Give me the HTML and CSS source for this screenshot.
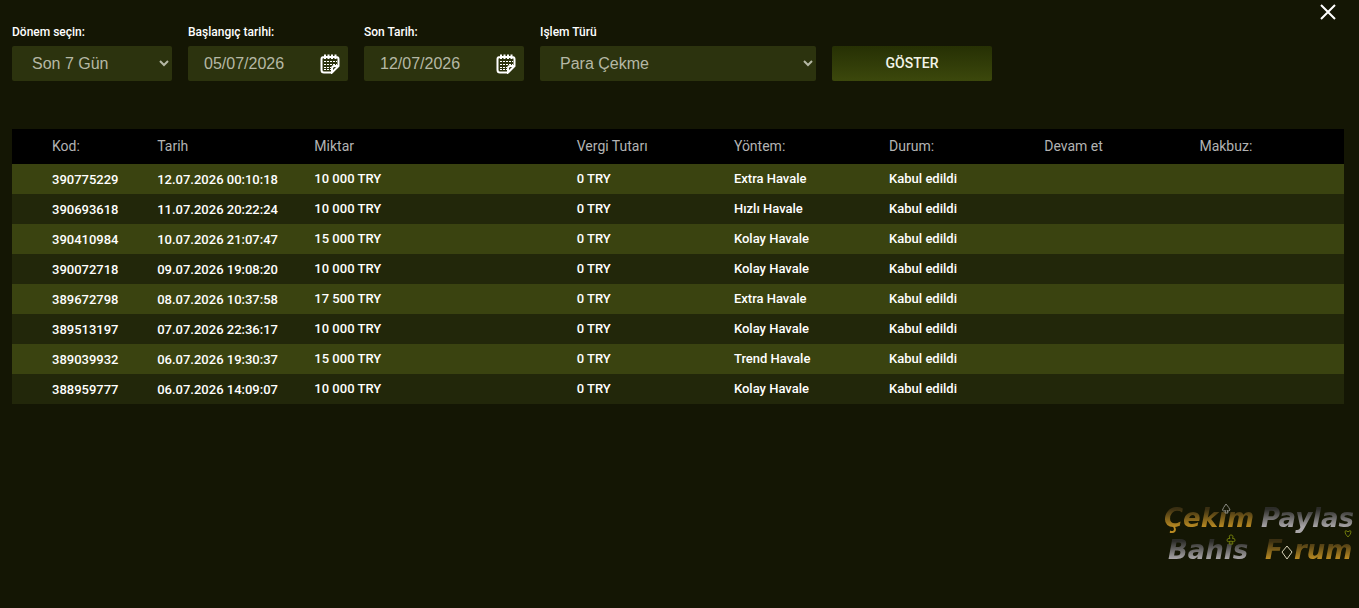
FILE: index.html
```html
<!DOCTYPE html>
<html lang="tr">
<head>
    <meta charset="UTF-8">
    <meta name="viewport" content="width=device-width, initial-scale=1.0">
    <title>İşlem Geçmişi</title>
    <link rel="stylesheet" href="styles.css">
</head>
<body>

    <button class="btnClose" type="button" aria-label="Kapat">
        <svg width="16" height="16" viewBox="0 0 16 16"><path d="M1 1L15 15M15 1L1 15"/></svg>
    </button>

    <form class="filters">
        <div class="inputGroup">
            <label for="period">Dönem seçin:</label>
            <select id="period">
                <option>Son 7 Gün</option>
            </select>
        </div>
        <div class="inputGroup">
            <label for="dateFrom">Başlangıç tarihi:</label>
            <div class="dateField">
                <input type="text" id="dateFrom" value="05/07/2026" autocomplete="off">
                <svg class="calendar" width="20" height="20" viewBox="0 0 20 20">
                    <path class="frame" d="M12 18.500H4Q1.500 18.500 1.500 16V5Q1.500 3 4 3H16Q18.500 3 18.500 5V12L12 18.500V14.500Q12 12 14.500 12H18.500M5 0.500V5M8.500 0.500V5M12 0.500V5M15.500 0.500V5"/>
                    <path class="dots" d="M4 7.500H17M4 10.500H17M4 13.500H11M4 15.500H11"/>
                </svg>
            </div>
        </div>
        <div class="inputGroup">
            <label for="dateTo">Son Tarih:</label>
            <div class="dateField">
                <input type="text" id="dateTo" value="12/07/2026" autocomplete="off">
                <svg class="calendar" width="20" height="20" viewBox="0 0 20 20">
                    <path class="frame" d="M12 18.500H4Q1.500 18.500 1.500 16V5Q1.500 3 4 3H16Q18.500 3 18.500 5V12L12 18.500V14.500Q12 12 14.500 12H18.500M5 0.500V5M8.500 0.500V5M12 0.500V5M15.500 0.500V5"/>
                    <path class="dots" d="M4 7.500H17M4 10.500H17M4 13.500H11M4 15.500H11"/>
                </svg>
            </div>
        </div>
        <div class="inputGroup wide">
            <label for="type">Işlem Türü</label>
            <select id="type">
                <option>Para Çekme</option>
            </select>
        </div>
        <button class="btnShow" type="button">GÖSTER</button>
    </form>

    <table class="history">
        <thead>
            <tr>
                <th class="colCode">Kod:</th>
                <th class="colDate">Tarih</th>
                <th class="colAmount">Miktar</th>
                <th class="colDate">Vergi Tutarı</th>
                <th class="colStatus">Yöntem:</th>
                <th class="colStatus">Durum:</th>
                <th class="colStatus">Devam et</th>
                <th>Makbuz:</th>
            </tr>
        </thead>
        <tbody>
            <tr><td class="num">390775229</td><td class="num">12.07.2026 00:10:18</td><td>10 000 TRY</td><td>0 TRY</td><td>Extra Havale</td><td>Kabul edildi</td><td></td><td></td></tr>
            <tr><td class="num">390693618</td><td class="num">11.07.2026 20:22:24</td><td>10 000 TRY</td><td>0 TRY</td><td>Hızlı Havale</td><td>Kabul edildi</td><td></td><td></td></tr>
            <tr><td class="num">390410984</td><td class="num">10.07.2026 21:07:47</td><td>15 000 TRY</td><td>0 TRY</td><td>Kolay Havale</td><td>Kabul edildi</td><td></td><td></td></tr>
            <tr><td class="num">390072718</td><td class="num">09.07.2026 19:08:20</td><td>10 000 TRY</td><td>0 TRY</td><td>Kolay Havale</td><td>Kabul edildi</td><td></td><td></td></tr>
            <tr><td class="num">389672798</td><td class="num">08.07.2026 10:37:58</td><td>17 500 TRY</td><td>0 TRY</td><td>Extra Havale</td><td>Kabul edildi</td><td></td><td></td></tr>
            <tr><td class="num">389513197</td><td class="num">07.07.2026 22:36:17</td><td>10 000 TRY</td><td>0 TRY</td><td>Kolay Havale</td><td>Kabul edildi</td><td></td><td></td></tr>
            <tr><td class="num">389039932</td><td class="num">06.07.2026 19:30:37</td><td>15 000 TRY</td><td>0 TRY</td><td>Trend Havale</td><td>Kabul edildi</td><td></td><td></td></tr>
            <tr><td class="num">388959777</td><td class="num">06.07.2026 14:09:07</td><td>10 000 TRY</td><td>0 TRY</td><td>Kolay Havale</td><td>Kabul edildi</td><td></td><td></td></tr>
        </tbody>
    </table>

    <svg class="watermark" width="196" height="66" viewBox="0 0 196 66">
        <defs>
            <linearGradient id="gold" x1="0" y1="0" x2="0" y2="1">
                <stop offset="0.2" stop-color="#3a2f12"/>
                <stop offset="0.8" stop-color="#b98a22"/>
            </linearGradient>
            <linearGradient id="silver" x1="0" y1="0" x2="0" y2="1">
                <stop offset="0.2" stop-color="#2c2c28"/>
                <stop offset="0.8" stop-color="#a9a6a8"/>
            </linearGradient>
        </defs>
        <text x="1" y="27" fill="url(#gold)">Çekım</text>
        <text x="98" y="27" fill="url(#silver)">Paylas</text>
        <text x="5" y="59" fill="url(#silver)">Bahıs</text>
        <text x="102" y="59" fill="url(#gold)">F</text>
        <text x="131" y="59" fill="url(#gold)">rum</text>
        <!-- card suits -->
        <path class="spade" d="M63 4Q60 8 59.500 10Q60 12 62.500 10.500L62 13H65L64 10.500Q66.500 12 67 10Q66.500 8 63 4Z"/>
        <path class="green" d="M182 32Q182 30 184 31L185 32L186 31Q188 30 188 32Q188 34 185 37Q182 34 182 32Z"/>
        <path class="green" d="M67.500 41Q64 43 64 40Q64 38 67 38.500Q65 35 68 35Q71 35 69.500 38.500Q72 38 72 40Q72 43 68.500 41L70 44H66Z"/>
        <path class="diamond" d="M124 46L129 52L124 59L119 52Z"/>
    </svg>

</body>
</html>
```
FILE: styles.css
```css
*{
    margin: 0px;
    padding: 0px;
    box-sizing: border-box;
}
body {
    font-family: Roboto, sans-serif;
    font-size: 13px;
    font-weight: 500;
    line-height: 16px;
    color: #fff;
    background-color: #141604;
    min-height: 100vh;
    padding: 24px 15px 24px 12px;
}
.btnClose {
    position: absolute;
    top: 0px;
    right: 19px;
    width: 24px;
    height: 24px;
    padding: 4px;
    border: none;
    background: none;
    cursor: pointer;
}
.btnClose svg {
    display: block;
    stroke: #fff;
    stroke-width: 2;
}
.filters {
    display: flex;
    align-items: flex-end;
    gap: 16px;
    margin-bottom: 48px;
}
.inputGroup {
    display: flex;
    flex-direction: column;
    gap: 6px;
    width: 160px;
}
.inputGroup label {
    font-size: 12px;
}
.wide {
    width: 276px;
}
select, .dateField {
    width: 100%;
    height: 35px;
    border: none;
    border-radius: 2px;
    background-color: #2c330e;
    color: #b5b8a5;
    padding: 0px 16px;
    font-family: "Liberation Sans", Arial, sans-serif;
    font-size: 16px;
}
.dateField {
    display: flex;
    align-items: center;
    justify-content: space-between;
    padding-right: 8px;
}
.dateField input {
    width: 100px;
    border: none;
    outline: none;
    background: none;
    color: inherit;
    font: inherit;
}
.calendar path {
    fill: none;
    stroke: #fff;
}
.calendar .frame {
    stroke-width: 2;
}
.calendar .dots {
    stroke-width: 1;
    stroke-dasharray: 2 1;
}
.btnShow {
    width: 160px;
    height: 35px;
    padding-bottom: 2px;
    border: none;
    border-radius: 2px;
    background: linear-gradient(#263004, #3c480c);
    color: #f3f4e8;
    font-family: inherit;
    font-size: 14px;
    font-weight: 500;
    cursor: pointer;
}
.history {
    width: 100%;
    table-layout: fixed;
    border-collapse: collapse;
    text-align: left;
}
.history th {
    height: 35px;
    padding-bottom: 2px;
    background-color: #000;
    color: #b3b3b3;
    font-size: 14px;
    font-weight: 400;
}
.history td {
    height: 30px;
    white-space: nowrap;
}
.history .num {
    padding-top: 2px;
}
.history th:first-child, .history td:first-child {
    padding-left: 40px;
}
.colCode {
    width: 10.9%;
}
.colDate {
    width: 11.8%;
}
.colAmount {
    width: 19.7%;
}
.colStatus {
    width: 11.65%;
}
.history tbody tr:nth-child(odd) {
    background-color: #3a4310;
}
.history tbody tr:nth-child(even) {
    background-color: #22270a;
}
.watermark {
    position: fixed;
    right: 0px;
    bottom: 42px;
}
.watermark text {
    font-family: "DejaVu Sans", sans-serif;
    font-size: 26px;
    font-weight: 700;
    font-style: italic;
}
.watermark path {
    fill: none;
    stroke-width: 1;
}
.watermark .spade {
    stroke: #8c8c84;
}
.watermark .green {
    stroke: #6f7a0c;
}
.watermark .diamond {
    stroke: #d8d3b8;
}
```
